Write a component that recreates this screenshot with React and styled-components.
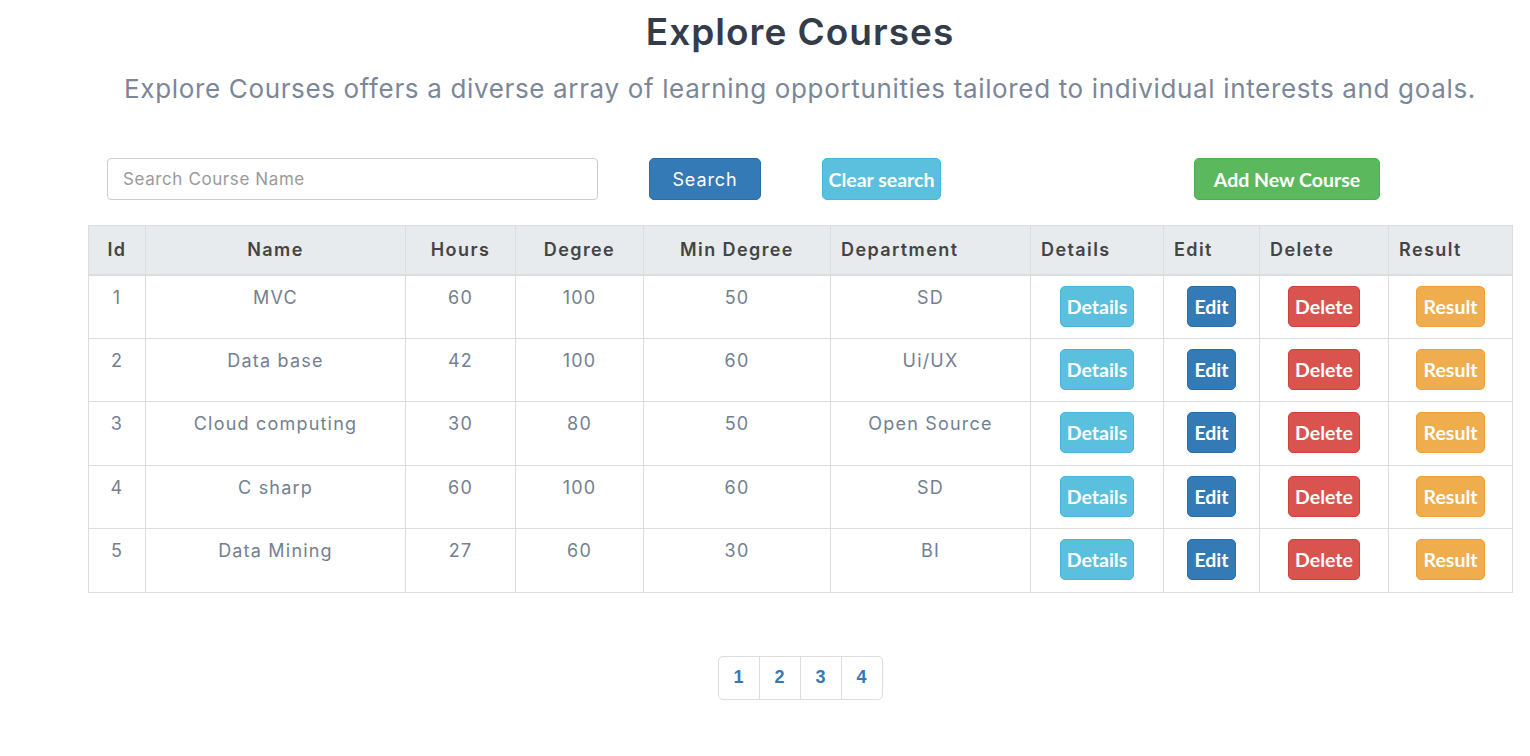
import React from "react";
import styled, { createGlobalStyle } from "styled-components";

const GlobalStyle = createGlobalStyle`
    body {
        margin: 0;
        background: #fff;
        font-family: Inter, "Open Sans", sans-serif;
    }
    * {
        box-sizing: border-box;
    }
`

const Page = styled.div`
    padding: 10px 18px 40px 88px;
`

const Title = styled.h1`
    margin: 0;
    text-align: center;
    font-size: 37px;
    line-height: 44px;
    font-weight: 600;
    letter-spacing: 1px;
    color: #333c4a;
`

const Subtitle = styled.p`
    margin: 19px 0 0;
    text-align: center;
    font-size: 26px;
    line-height: 32px;
    font-weight: 400;
    letter-spacing: 0.65px;
    color: #7b8798;
`

const Toolbar = styled.div`
    display: flex;
    align-items: center;
    margin-top: 53px;
    padding-left: 19px;
`

const SearchInput = styled.input`
    width: 491px;
    height: 42px;
    padding: 0 15px;
    border: 1px solid #ccc;
    border-radius: 4px;
    font-family: Inter, sans-serif;
    font-size: 17px;
    letter-spacing: 0.6px;
    color: #555;

    &::placeholder {
        color: #9a9a9a;
    }
`

const colors = {
    primary: ["#337ab7", "#2e6da4"],
    info: ["#5bc0de", "#46b8da"],
    success: ["#5cb85c", "#4cae4c"],
    danger: ["#d9534f", "#d43f3a"],
    warning: ["#f0ad4e", "#eea236"],
}

const Button = styled.button`
    display: inline-flex;
    align-items: center;
    justify-content: center;
    height: ${p => p.$h || 41}px;
    width: ${p => p.$w}px;
    margin-left: ${p => p.$ml || 0}px;
    padding: 0;
    border: 1px solid ${p => colors[p.$kind][1]};
    border-radius: 5px;
    background: ${p => colors[p.$kind][0]};
    color: #fff;
    font-family: ${p => (p.$light ? "Inter, sans-serif" : "Lato, sans-serif")};
    font-size: ${p => (p.$light ? 18 : 19.5)}px;
    font-weight: ${p => (p.$light ? 400 : 700)};
    letter-spacing: ${p => (p.$light ? 0.9 : 0)}px;
    cursor: pointer;
`

const Table = styled.table`
    width: 1424px;
    margin-top: 25px;
    border-collapse: collapse;
    table-layout: fixed;
`

const Th = styled.th`
    height: 49px;
    padding: 0 10px;
    background: #e8ebee;
    border: 1px solid #dddddd;
    border-bottom: 2px solid #dddddd;
    text-align: ${p => p.$align || "center"};
    font-size: 18px;
    font-weight: 600;
    letter-spacing: 1.4px;
    color: #444;
`

const Td = styled.td`
    height: 63.6px;
    padding: 10px 8px 0;
    border: 1px solid #dddddd;
    vertical-align: top;
    text-align: center;
    font-size: 18px;
    line-height: 24px;
    letter-spacing: 1.2px;
    color: #738091;
`

const Pagination = styled.ul`
    display: flex;
    justify-content: center;
    list-style: none;
    margin: 63px 0 0;
    padding: 0;
`

const PageItem = styled.li`
    width: 42px;
    height: 44px;
    display: flex;
    align-items: center;
    justify-content: center;
    border: 1px solid #ddd;
    margin-left: -1px;
    font-family: "Liberation Sans", Arial, sans-serif;
    font-size: 18px;
    font-weight: 700;
    color: #337ab7;

    &:first-child {
        border-radius: 5px 0 0 5px;
        margin-left: 0;
    }

    &:last-child {
        border-radius: 0 5px 5px 0;
    }
`

const columns = [
    { label: "Id", width: 57 },
    { label: "Name", width: 260 },
    { label: "Hours", width: 110 },
    { label: "Degree", width: 128 },
    { label: "Min Degree", width: 187 },
    { label: "Department", width: 200, align: "left" },
    { label: "Details", width: 133, align: "left" },
    { label: "Edit", width: 96, align: "left" },
    { label: "Delete", width: 129, align: "left" },
    { label: "Result", width: 124, align: "left" },
]

const courses = [
    [1, "MVC", 60, 100, 50, "SD"],
    [2, "Data base", 42, 100, 60, "Ui/UX"],
    [3, "Cloud computing", 30, 80, 50, "Open Source"],
    [4, "C sharp", 60, 100, 60, "SD"],
    [5, "Data Mining", 27, 60, 30, "BI"],
]

const App = () => {
    return (
        <Page>
            <GlobalStyle />
            <Title>Explore Courses</Title>
            <Subtitle>
                Explore Courses offers a diverse array of learning opportunities tailored to individual interests and goals.
            </Subtitle>

            <Toolbar>
                <SearchInput placeholder="Search Course Name" />
                <Button $kind="primary" $w={112} $h={42} $ml={51} $light>Search</Button>
                <Button $kind="info" $w={119} $h={42} $ml={61}>Clear search</Button>
                <Button $kind="success" $w={186} $h={42} $ml={253}>Add New Course</Button>
            </Toolbar>

            <Table>
                <colgroup>
                    {columns.map(c => <col key={c.label} style={{ width: c.width }} />)}
                </colgroup>
                <thead>
                    <tr>
                        {columns.map(c => <Th key={c.label} $align={c.align}>{c.label}</Th>)}
                    </tr>
                </thead>
                <tbody>
                    {courses.map(row => (
                        <tr key={row[0]}>
                            {row.map((v, i) => <Td key={i}>{v}</Td>)}
                            <Td><Button $kind="info" $w={74}>Details</Button></Td>
                            <Td><Button $kind="primary" $w={49}>Edit</Button></Td>
                            <Td><Button $kind="danger" $w={72}>Delete</Button></Td>
                            <Td><Button $kind="warning" $w={69}>Result</Button></Td>
                        </tr>
                    ))}
                </tbody>
            </Table>

            <Pagination>
                {[1, 2, 3, 4].map(n => <PageItem key={n}>{n}</PageItem>)}
            </Pagination>
        </Page>
    )
}

export default App
